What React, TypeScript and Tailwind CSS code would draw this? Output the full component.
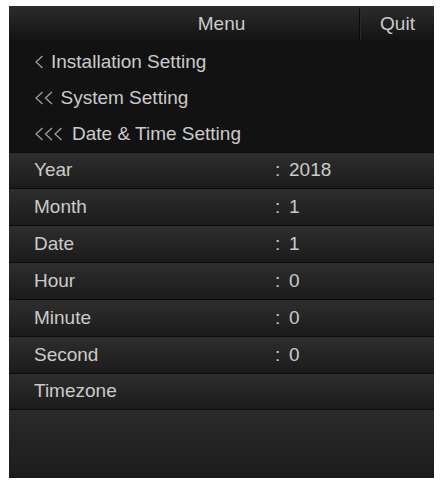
const crumbs = [
  { count: 1, label: 'Installation Setting', gap: 'mr-[8px]' },
  { count: 2, label: 'System Setting', gap: 'mr-[8px]' },
  { count: 3, label: 'Date & Time Setting', gap: 'mr-[10px]' },
];

const rows = [
  { label: 'Year', value: '2018', h: 'h-[36px]' },
  { label: 'Month', value: '1', h: 'h-[37px]' },
  { label: 'Date', value: '1', h: 'h-[37px]' },
  { label: 'Hour', value: '0', h: 'h-[37px]' },
  { label: 'Minute', value: '0', h: 'h-[37px]' },
  { label: 'Second', value: '0', h: 'h-[37px]' },
  { label: 'Timezone', value: '', h: 'h-[36px]' },
];

// thin back chevrons, one per menu level
function Chevrons({ count }: { count: number }) {
  const w = 8 + (count - 1) * 9.5;
  return (
    <svg width={w} height={14} viewBox={`0 0 ${w} 14`} className="shrink-0">
      {Array.from({ length: count }).map((_, i) => {
        const x = i * 9.5;
        return (
          <polyline
            key={i}
            points={`${x + 7.5},1 ${x + 1},7 ${x + 7.5},13`}
            fill="none"
            stroke="#a0a0a0"
            strokeWidth={1.3}
          />
        );
      })}
    </svg>
  );
}

export default function App() {
  return (
    <div
      className="w-[440px] h-[483px] bg-white pt-[6px] pl-[9px]"
      style={{ fontFamily: '"Liberation Sans", Arial, sans-serif' }}
    >
      <div className="w-[425px] h-[472px] flex flex-col bg-[#121212] text-[19px] text-[#cbcbcb] overflow-hidden">
        {/* header */}
        <div className="h-[34px] flex shrink-0 pt-[2px] bg-gradient-to-b from-[#2c2c2c] to-[#141414]">
          <div className="w-[350px] flex items-center justify-center pl-[75px]">Menu</div>
          <div className="w-px bg-[#0b0b0b]" />
          <div className="w-px bg-[#2a2a2a]" />
          <div className="flex-1 flex items-center justify-center">Quit</div>
        </div>

        {/* breadcrumb */}
        <div className="h-[112px] shrink-0 flex flex-col pt-[4px] bg-[#121212]">
          {crumbs.map((c) => (
            <div key={c.label} className="h-[36px] flex items-center pl-[26px]">
              <span className={`${c.gap} flex`}>
                <Chevrons count={c.count} />
              </span>
              <span>{c.label}</span>
            </div>
          ))}
        </div>

        {/* settings */}
        <div className="flex flex-col shrink-0">
          {rows.map((r) => (
            <div
              key={r.label}
              className={`${r.h} flex items-center pl-[25px] border-t border-[#0c0c0c] bg-gradient-to-b from-[#2e2e2e] to-[#1b1b1b]`}
            >
              <span className="w-[241px]">{r.label}</span>
              {r.value && (
                <>
                  <span className="w-[14px]">:</span>
                  <span>{r.value}</span>
                </>
              )}
            </div>
          ))}
        </div>

        <div className="flex-1 border-t border-[#0c0c0c] bg-gradient-to-b from-[#2b2b2b] to-[#1b1b1b]" />
      </div>
    </div>
  );
}
